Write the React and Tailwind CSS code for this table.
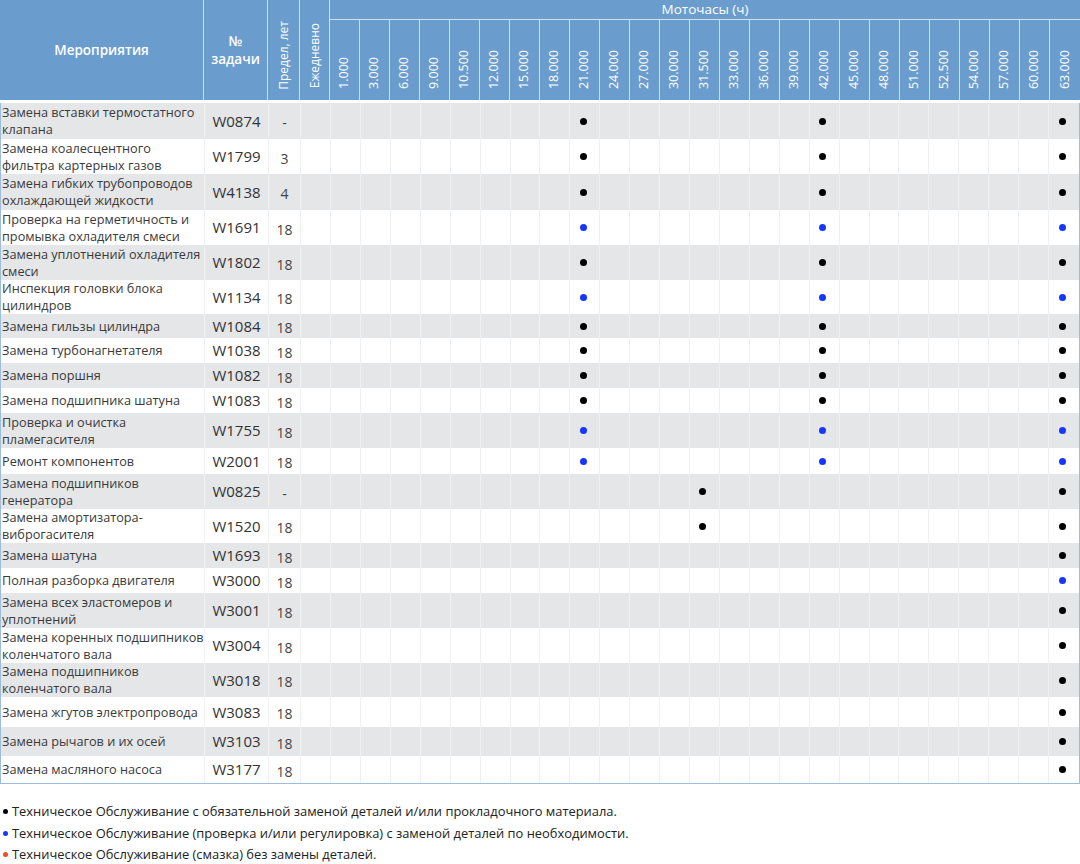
import React from "react";

const hours = [
  "1.000", "3.000", "6.000", "9.000", "10.500", "12.000", "15.000", "18.000",
  "21.000", "24.000", "27.000", "30.000", "31.500", "33.000", "36.000", "39.000",
  "42.000", "45.000", "48.000", "51.000", "52.500", "54.000", "57.000", "60.000", "63.000",
];

// k = обязательная замена (black), b = проверка (blue)
const rows = [
  { name: ["Замена вставки термостатного", "клапана"], code: "W0874", limit: "-", h: "h-[36px]", dots: { 8: "k", 16: "k", 24: "k" } },
  { name: ["Замена коалесцентного", "фильтра картерных газов"], code: "W1799", limit: "3", h: "h-[35px]", dots: { 8: "k", 16: "k", 24: "k" } },
  { name: ["Замена гибких трубопроводов", "охлаждающей жидкости"], code: "W4138", limit: "4", h: "h-[36px]", dots: { 8: "k", 16: "k", 24: "k" } },
  { name: ["Проверка на герметичность и", "промывка охладителя смеси"], code: "W1691", limit: "18", h: "h-[35px]", dots: { 8: "b", 16: "b", 24: "b" } },
  { name: ["Замена уплотнений охладителя", "смеси"], code: "W1802", limit: "18", h: "h-[35px]", dots: { 8: "k", 16: "k", 24: "k" } },
  { name: ["Инспекция головки блока", "цилиндров"], code: "W1134", limit: "18", h: "h-[34px]", dots: { 8: "b", 16: "b", 24: "b" } },
  { name: ["Замена гильзы цилиндра"], code: "W1084", limit: "18", h: "h-[24px]", dots: { 8: "k", 16: "k", 24: "k" } },
  { name: ["Замена турбонагнетателя"], code: "W1038", limit: "18", h: "h-[25px]", dots: { 8: "k", 16: "k", 24: "k" } },
  { name: ["Замена поршня"], code: "W1082", limit: "18", h: "h-[25px]", dots: { 8: "k", 16: "k", 24: "k" } },
  { name: ["Замена подшипника шатуна"], code: "W1083", limit: "18", h: "h-[25px]", dots: { 8: "k", 16: "k", 24: "k" } },
  { name: ["Проверка и очистка", "пламегасителя"], code: "W1755", limit: "18", h: "h-[35px]", dots: { 8: "b", 16: "b", 24: "b" } },
  { name: ["Ремонт компонентов"], code: "W2001", limit: "18", h: "h-[26px]", dots: { 8: "b", 16: "b", 24: "b" } },
  { name: ["Замена подшипников", "генератора"], code: "W0825", limit: "-", h: "h-[35px]", dots: { 12: "k", 24: "k" } },
  { name: ["Замена амортизатора-", "виброгасителя"], code: "W1520", limit: "18", h: "h-[34px]", dots: { 12: "k", 24: "k" } },
  { name: ["Замена шатуна"], code: "W1693", limit: "18", h: "h-[25px]", dots: { 24: "k" } },
  { name: ["Полная разборка двигателя"], code: "W3000", limit: "18", h: "h-[25px]", dots: { 24: "b" } },
  { name: ["Замена всех эластомеров и", "уплотнений"], code: "W3001", limit: "18", h: "h-[35px]", dots: { 24: "k" } },
  { name: ["Замена коренных подшипников", "коленчатого вала"], code: "W3004", limit: "18", h: "h-[35px]", dots: { 24: "k" } },
  { name: ["Замена подшипников", "коленчатого вала"], code: "W3018", limit: "18", h: "h-[34px]", dots: { 24: "k" } },
  { name: ["Замена жгутов электропровода"], code: "W3083", limit: "18", h: "h-[30px]", dots: { 24: "k" } },
  { name: ["Замена рычагов и их осей"], code: "W3103", limit: "18", h: "h-[29px]", dots: { 24: "k" } },
  { name: ["Замена масляного насоса"], code: "W3177", limit: "18", h: "h-[27px]", dots: { 24: "k" } },
];

const cols = "grid grid-cols-[204px_64px_32px_30px_repeat(25,minmax(0,1fr))]";

function Header() {
  return (
    <div className={`${cols} grid-rows-[20px_80px] bg-[#6a9dcd] text-white`}>
      <div className="row-span-2 flex items-center justify-center border-r border-[#cfe0f1] text-[13.5px] font-semibold">
        Мероприятия
      </div>
      <div className="row-span-2 flex items-center justify-center border-r border-[#cfe0f1] text-center text-[13.5px] font-semibold leading-[18px]">
        №<br />задачи
      </div>
      <div className="row-span-2 flex items-end justify-center border-r border-[#cfe0f1] pb-[10px]">
        <span className="rotate-180 text-[12px] leading-none [writing-mode:vertical-rl]">Предел, лет</span>
      </div>
      <div className="row-span-2 flex items-end justify-center border-r border-[#cfe0f1] pb-[12px]">
        <span className="rotate-180 text-[12px] leading-none [writing-mode:vertical-rl]">Ежедневно</span>
      </div>
      <div className="col-span-25 flex items-center justify-center border-b border-[#cfe0f1] text-[13.5px]">
        Моточасы (ч)
      </div>
      {hours.map((h, i) => (
        <div
          key={h}
          className={`flex items-end justify-center pb-[11px] ${i < hours.length - 1 ? "border-r border-[#cfe0f1]" : ""}`}
        >
          <span className="rotate-180 text-[12.5px] leading-none [writing-mode:vertical-rl]">{h}</span>
        </div>
      ))}
    </div>
  );
}

function Dot({ kind }) {
  return (
    <span
      className={`-ml-[3px] block h-[7px] w-[7px] rounded-full ${kind === "b" ? "bg-[#1636ff]" : "bg-black"}`}
    />
  );
}

function Row({ row, index }) {
  const bg = index % 2 === 0 ? "bg-[#e5e6e8]" : "bg-white";
  return (
    <div className={`${cols} ${row.h} ${bg}`}>
      <div className="flex items-center whitespace-nowrap border-r border-[#eef0f2] pl-[1px] text-[12.7px] leading-[17px] text-[#3a3a3a]">
        <div>
          {row.name.map((l, i) => (
            <div key={i}>{l}</div>
          ))}
        </div>
      </div>
      <div className="flex items-center justify-center border-r border-[#eef0f2] text-[15px] text-[#333]">
        {row.code}
      </div>
      <div className="flex items-center justify-center border-r border-[#eef0f2] pt-[3px] text-[14px] text-[#444]">
        {row.limit}
      </div>
      <div className="border-r border-[#eef0f2]" />
      {hours.map((h, i) => (
        <div
          key={h}
          className={`flex items-center justify-center ${i < hours.length - 1 ? "border-r border-[#eef0f2]" : ""}`}
        >
          {row.dots[i] && <Dot kind={row.dots[i]} />}
        </div>
      ))}
    </div>
  );
}

function Legend() {
  const items = [
    { c: "bg-black", t: "Техническое Обслуживание с обязательной заменой деталей и/или прокладочного материала." },
    { c: "bg-[#1636ff]", t: "Техническое Обслуживание (проверка и/или регулировка) с заменой деталей по необходимости." },
    { c: "bg-[#e8541c]", t: "Техническое Обслуживание (смазка) без замены деталей." },
  ];
  return (
    <div className="mt-[17px] pl-[3px] text-[12.9px] leading-[21.5px] text-[#222]">
      {items.map((it) => (
        <div key={it.t} className="flex items-center gap-[4px]">
          <span className={`h-[5px] w-[5px] rounded-full ${it.c}`} />
          <span>{it.t}</span>
        </div>
      ))}
    </div>
  );
}

export default function App() {
  return (
    <div className="h-[864px] w-[1080px] overflow-hidden bg-white font-['Open_Sans',sans-serif]">
      <Header />
      <div className="h-[3px] bg-white" />
      <div className="border-b border-l border-r border-[#9dbde0]">
        {rows.map((r, i) => (
          <Row key={r.code} row={r} index={i} />
        ))}
      </div>
      <Legend />
    </div>
  );
}
